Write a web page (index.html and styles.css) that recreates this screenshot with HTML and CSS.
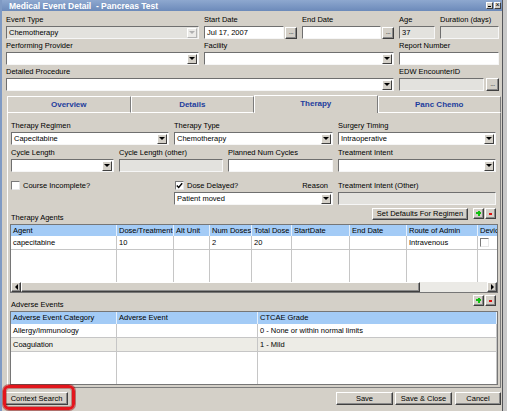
FILE: index.html
```html
<!DOCTYPE html>
<html lang="en">

<head>
    <meta charset="UTF-8">
    <title>Medical Event Detail - Pancreas Test</title>
    <link rel="stylesheet" href="styles.css">
</head>

<body>
    <div class="window">
        <div class="titlebar">
            <span class="title">Medical Event Detail  - Pancreas Test</span>
            <span class="win-btn min"></span>
            <span class="win-btn close">&times;</span>
        </div>

        <div class="top">
            <div class="fld">
                <label>Event Type</label>
                <div class="box combo disabled"><span>Chemotherapy</span><i class="arrow"></i></div>
            </div>
            <div class="fld">
                <label>Start Date</label>
                <div class="pick"><div class="box">Jul 17, 2007</div><span class="btn dots">...</span></div>
            </div>
            <div class="fld">
                <label>End Date</label>
                <div class="pick"><div class="box"></div><span class="btn dots">...</span></div>
            </div>
            <div class="fld">
                <label>Age</label>
                <div class="box disabled">37</div>
            </div>
            <div class="fld">
                <label>Duration (days)</label>
                <div class="box disabled"></div>
            </div>

            <div class="fld">
                <label>Performing Provider</label>
                <div class="box combo"><span></span><i class="arrow"></i></div>
            </div>
            <div class="fld span-2">
                <label>Facility</label>
                <div class="box combo"><span></span><i class="arrow"></i></div>
            </div>
            <div class="fld span-2">
                <label>Report Number</label>
                <div class="box"></div>
            </div>

            <div class="fld span-3">
                <label>Detailed Procedure</label>
                <div class="box combo"><span></span><i class="arrow"></i></div>
            </div>
            <div class="fld span-2">
                <label>EDW EncounterID</label>
                <div class="pick wide"><div class="box disabled"></div><span class="btn dots big">...</span></div>
            </div>
        </div>

        <div class="tabs">
            <div class="tab">Overview</div>
            <div class="tab">Details</div>
            <div class="tab active">Therapy</div>
            <div class="tab">Panc Chemo</div>
        </div>

        <div class="panel">
            <div class="row">
                <div class="fld regimen">
                    <label>Therapy Regimen</label>
                    <div class="box combo"><span>Capecitabine</span><i class="arrow"></i></div>
                </div>
                <div class="fld ttype">
                    <label>Therapy Type</label>
                    <div class="box combo"><span>Chemotherapy</span><i class="arrow"></i></div>
                </div>
                <div class="fld timing">
                    <label>Surgery Timing</label>
                    <div class="box combo"><span>Intraoperative</span><i class="arrow"></i></div>
                </div>
            </div>

            <div class="row">
                <div class="fld cycle">
                    <label>Cycle Length</label>
                    <div class="box combo"><span></span><i class="arrow"></i></div>
                </div>
                <div class="fld cycle-other">
                    <label>Cycle Length (other)</label>
                    <div class="box disabled"></div>
                </div>
                <div class="fld planned">
                    <label>Planned Num Cycles</label>
                    <div class="box"></div>
                </div>
                <div class="fld timing">
                    <label>Treatment Intent</label>
                    <div class="box combo"><span></span><i class="arrow"></i></div>
                </div>
            </div>

            <div class="row row-checks">
                <div class="fld regimen">
                    <div class="check"><span class="cb"></span>Course Incomplete?</div>
                </div>
                <div class="fld ttype">
                    <div class="check">
                        <span class="cb"><svg width="7" height="7" viewBox="0 0 7 7"><path d="M0.8 3.4 L2.7 5.4 L6.2 1.2" fill="none" stroke="#000" stroke-width="1.4"/></svg></span>
                        Dose Delayed?
                        <span class="reason">Reason</span>
                    </div>
                    <div class="box combo"><span>Patient moved</span><i class="arrow"></i></div>
                </div>
                <div class="fld timing">
                    <label>Treatment Intent (Other)</label>
                    <div class="box disabled"></div>
                </div>
            </div>

            <div class="grid-head">
                <span class="caption">Therapy Agents</span>
                <div class="tools">
                    <button class="btn set-defaults">Set Defaults For Regimen</button>
                    <button class="btn add"></button>
                    <button class="btn del"></button>
                </div>
            </div>
            <div class="grid-box agents">
                <div class="grid-view">
                    <table class="grid">
                        <tr>
                            <th>Agent</th>
                            <th>Dose/Treatment</th>
                            <th>Alt Unit</th>
                            <th>Num Doses</th>
                            <th>Total Dose</th>
                            <th>StartDate</th>
                            <th>End Date</th>
                            <th>Route of Admin</th>
                            <th>Device</th>
                        </tr>
                        <tr>
                            <td>capecitabine</td>
                            <td>10</td>
                            <td></td>
                            <td>2</td>
                            <td>20</td>
                            <td></td>
                            <td></td>
                            <td>Intravenous</td>
                            <td><span class="cb"></span></td>
                        </tr>
                        <tr class="fill">
                            <td></td><td></td><td></td><td></td><td></td><td></td><td></td><td></td><td></td>
                        </tr>
                    </table>
                </div>
                <div class="hscroll">
                    <span class="btn sb-btn sb-left"></span>
                    <span class="btn thumb"></span>
                    <span class="track"></span>
                    <span class="btn sb-btn sb-right"></span>
                </div>
            </div>

            <div class="grid-head short">
                <span class="caption">Adverse Events</span>
                <div class="tools">
                    <button class="btn add"></button>
                    <button class="btn del"></button>
                </div>
            </div>
            <div class="grid-box events">
                <table class="grid">
                    <tr>
                        <th>Adverse Event Category</th>
                        <th>Adverse Event</th>
                        <th>CTCAE Grade</th>
                    </tr>
                    <tr>
                        <td>Allergy/Immunology</td>
                        <td></td>
                        <td>0 - None or within normal limits</td>
                    </tr>
                    <tr class="alt">
                        <td>Coagulation</td>
                        <td></td>
                        <td>1 - Mild</td>
                    </tr>
                    <tr class="fill">
                        <td></td><td></td><td></td>
                    </tr>
                </table>
            </div>
        </div>

        <div class="bottom">
            <button class="btn context">Context Search</button>
            <button class="btn save">Save</button>
            <button class="btn save-close">Save &amp; Close</button>
            <button class="btn cancel">Cancel</button>
        </div>

        <!-- red marker drawn round the Context Search button -->
        <div class="highlight"></div>
    </div>
</body>

</html>
```

FILE: styles.css
```css
* {
    box-sizing: border-box;
}

body {
    margin: 0;
    background-color: #c9c9c9;
    font-family: "Liberation Sans", Arial, sans-serif;
    font-size: 7.5px;
    color: #000;
}

.window {
    position: relative;
    width: 503px;
    height: 411px;
    background-color: #d4d0c8;
    border-left: 2px solid #7f9ac4;
    border-right: 1px solid #55565a;
    overflow: hidden;
}

/* title bar */
.titlebar {
    display: flex;
    align-items: center;
    height: 11px;
    padding: 0 1px 0 7px;
    background: linear-gradient(#8ea8cf, #6c8aba);
    color: #fff;
    font-size: 8.5px;
    font-weight: bold;
}

.title {
    flex: 1;
    white-space: pre;
}

.win-btn {
    position: relative;
    width: 7px;
    height: 7px;
    margin-left: 1px;
    background-color: #d4d0c8;
    border: 1px solid;
    border-color: #fff #404040 #404040 #fff;
    color: #000;
    font-size: 7px;
    line-height: 4px;
    text-align: center;
    font-weight: normal;
}

.win-btn.min::after {
    content: "";
    position: absolute;
    left: 1px;
    bottom: 1px;
    width: 3px;
    height: 1px;
    background-color: #000;
}

/* generic controls */
.btn {
    margin: 0;
    padding: 0;
    background-color: #d4d0c8;
    border: 1px solid;
    border-color: #fff #404040 #404040 #fff;
    box-shadow: inset -1px -1px 0 #8a8a8a;
    font: inherit;
    color: #000;
}

.fld {
    display: flex;
    flex-direction: column;
    min-width: 0;
}

.fld label {
    height: 13px;
    line-height: 13px;
    white-space: nowrap;
}

.box {
    display: flex;
    align-items: center;
    height: 13px;
    padding: 0 1px 0 2px;
    background-color: #fff;
    border: 1px solid;
    border-color: #6f6f6f #f6f6f6 #f6f6f6 #6f6f6f;
    line-height: 11px;
    white-space: nowrap;
    overflow: hidden;
}

.box.disabled {
    background-color: #e3e2de;
}

.box > span {
    flex: 1;
}

.arrow {
    display: flex;
    align-items: center;
    justify-content: center;
    width: 10px;
    height: 10px;
    background-color: #d4d0c8;
    border: 1px solid;
    border-color: #fff #404040 #404040 #fff;
}

.arrow::after {
    content: "";
    border-top: 3px solid #000;
    border-left: 3px solid transparent;
    border-right: 3px solid transparent;
}

.disabled .arrow {
    background-color: #ecebe8;
    border-color: #fff #b4b4b4 #b4b4b4 #fff;
}

.disabled .arrow::after {
    border-top-color: #b0b0b0;
}

.pick {
    display: flex;
    align-items: center;
    gap: 1px;
}

.pick .box {
    flex: 1;
    min-width: 0;
}

.dots {
    display: block;
    width: 12px;
    height: 12px;
    font-size: 7px;
    line-height: 8px;
    text-align: center;
    letter-spacing: -0.5px;
    color: #333;
    overflow: hidden;
}

.pick.wide {
    gap: 2px;
}

.dots.big {
    width: 13px;
    height: 13px;
    line-height: 9px;
}

/* top part of the dialog */
.top {
    display: grid;
    grid-template-columns: 193px 93px 92px 36px 59px;
    column-gap: 5px;
    padding: 2px 0 0 4px;
}

.span-2 {
    grid-column: span 2;
}

.span-3 {
    grid-column: span 3;
}

/* tabs */
.tabs {
    display: flex;
    align-items: flex-end;
    height: 18px;
    margin: 4px 1px 0 5px;
}

.tab {
    flex: 1;
    height: 17px;
    line-height: 15px;
    text-align: center;
    font-size: 8px;
    font-weight: bold;
    color: #1d3d9d;
    border: 1px solid;
    border-color: #fff #7c7c7c #fff #fff;
}

.tab.active {
    height: 18px;
    line-height: 16px;
    border-bottom: 0;
}

.panel {
    height: 275px;
    margin: 0 1px 0 5px;
    padding: 6px 3px 0 3px;
    border-left: 1px solid #fff;
    border-right: 1px solid #7c7c7c;
    border-bottom: 1px solid #7c7c7c;
}

.row {
    display: flex;
    gap: 5px;
}

.row + .row {
    margin-top: 1px;
}

.row.row-checks {
    margin-top: 7px;
}

.regimen,
.timing {
    width: 158px;
}

.ttype {
    width: 159px;
}

.cycle {
    width: 103px;
}

.cycle-other {
    width: 104px;
}

.planned {
    width: 105px;
}

.check {
    display: flex;
    align-items: center;
    gap: 3px;
    height: 13px;
    white-space: nowrap;
}

.cb {
    display: flex;
    align-items: center;
    justify-content: center;
    width: 9px;
    height: 9px;
    background-color: #fff;
    border: 1px solid;
    border-color: #7a7a7a #e8e8e8 #e8e8e8 #7a7a7a;
}

.ttype .check {
    padding-left: 1px;
}

.reason {
    margin-left: auto;
    padding-right: 5px;
}

/* grids */
.grid-head {
    display: flex;
    align-items: flex-end;
    height: 19px;
}

.grid-head.short {
    height: 18px;
}

.caption {
    flex: 1;
    line-height: 12px;
}

.tools {
    display: flex;
    gap: 1px;
    align-self: flex-start;
    margin: 3px 1px 0 0;
}

.short .tools {
    margin-top: 2px;
}

.set-defaults {
    width: 96px;
    height: 12px;
    margin-right: 4px;
    line-height: 10px;
}

.add,
.del {
    position: relative;
    width: 11px;
    height: 11px;
}

.add::before,
.add::after,
.del::before {
    content: "";
    position: absolute;
}

.add::before {
    left: 2px;
    top: 3px;
    width: 5px;
    height: 2px;
    background-color: #10c010;
}

.add::after {
    left: 3.5px;
    top: 1.5px;
    width: 2px;
    height: 5px;
    background-color: #10c010;
}

.del::before {
    left: 3px;
    top: 4px;
    width: 3px;
    height: 1.5px;
    background-color: #e01010;
}

.grid-box {
    width: 488px;
    margin-left: -1px;
    background-color: #fff;
    border: 1px solid #767676;
    overflow: hidden;
}

.grid-view {
    height: 57px;
    overflow: hidden;
}

.grid {
    border-collapse: separate;
    border-spacing: 0;
    table-layout: fixed;
}

.grid th {
    height: 11px;
    padding: 0 0 0 2px;
    background-color: #a3cbf6;
    border-right: 1px solid #e6f0fb;
    font-weight: normal;
    text-align: left;
    line-height: 10px;
    white-space: nowrap;
    overflow: hidden;
}

.grid td {
    height: 14px;
    padding: 0 0 0 2px;
    border-right: 1px solid #c6c6c6;
    border-bottom: 1px solid #c6c6c6;
    white-space: nowrap;
    overflow: hidden;
}

.grid tr.fill td {
    height: 32px;
    border-bottom: 0;
}

.agents .grid {
    width: 507px;
}

.agents th:nth-child(1) { width: 106px; }
.agents th:nth-child(2) { width: 57px; }
.agents th:nth-child(3) { width: 36px; }
.agents th:nth-child(4) { width: 42px; }
.agents th:nth-child(5) { width: 40px; }
.agents th:nth-child(6) { width: 58px; }
.agents th:nth-child(7) { width: 57px; }
.agents th:nth-child(8) { width: 71px; }
.agents th:nth-child(9) { width: 40px; }

.events {
    height: 74px;
}

.events .grid {
    width: 100%;
}

.events th {
    height: 12px;
}

.events th:nth-child(1) { width: 106px; }
.events th:nth-child(2) { width: 141px; }

.events tr.alt td {
    background-color: #edece6;
}

.hscroll {
    display: flex;
    height: 10px;
    background-color: #ebeae6;
}

.sb-btn {
    display: flex;
    align-items: center;
    justify-content: center;
    width: 10px;
    height: 10px;
}

.sb-left::after {
    content: "";
    border-right: 3px solid #000;
    border-top: 3px solid transparent;
    border-bottom: 3px solid transparent;
}

.sb-right::after {
    content: "";
    border-left: 3px solid #000;
    border-top: 3px solid transparent;
    border-bottom: 3px solid transparent;
}

.thumb {
    display: flex;
    align-items: center;
    justify-content: center;
    width: 399px;
    height: 10px;
}

.thumb::after {
    content: "";
    width: 4px;
    height: 3px;
    background-image: radial-gradient(#7a7a7a 40%, transparent 45%);
    background-size: 2px 2px;
}

.track {
    flex: 1;
}

/* bottom buttons */
.bottom {
    display: flex;
    align-items: flex-start;
    gap: 2px;
    height: 23px;
    padding: 4px 1px 0 3px;
}

.bottom .btn {
    height: 13px;
    line-height: 11px;
}

.context {
    width: 63px;
    margin-right: auto;
}

.save,
.save-close {
    width: 57px;
}

.cancel {
    width: 46px;
    margin-left: 1px;
}

.highlight {
    position: absolute;
    left: 1px;
    top: 385px;
    width: 72px;
    height: 25px;
    border: 3px solid #e3161d;
    border-radius: 6px;
    box-shadow: 0 0 0 1px rgba(130, 0, 0, 0.45), inset 0 0 0 1px rgba(130, 0, 0, 0.35);
}
```
